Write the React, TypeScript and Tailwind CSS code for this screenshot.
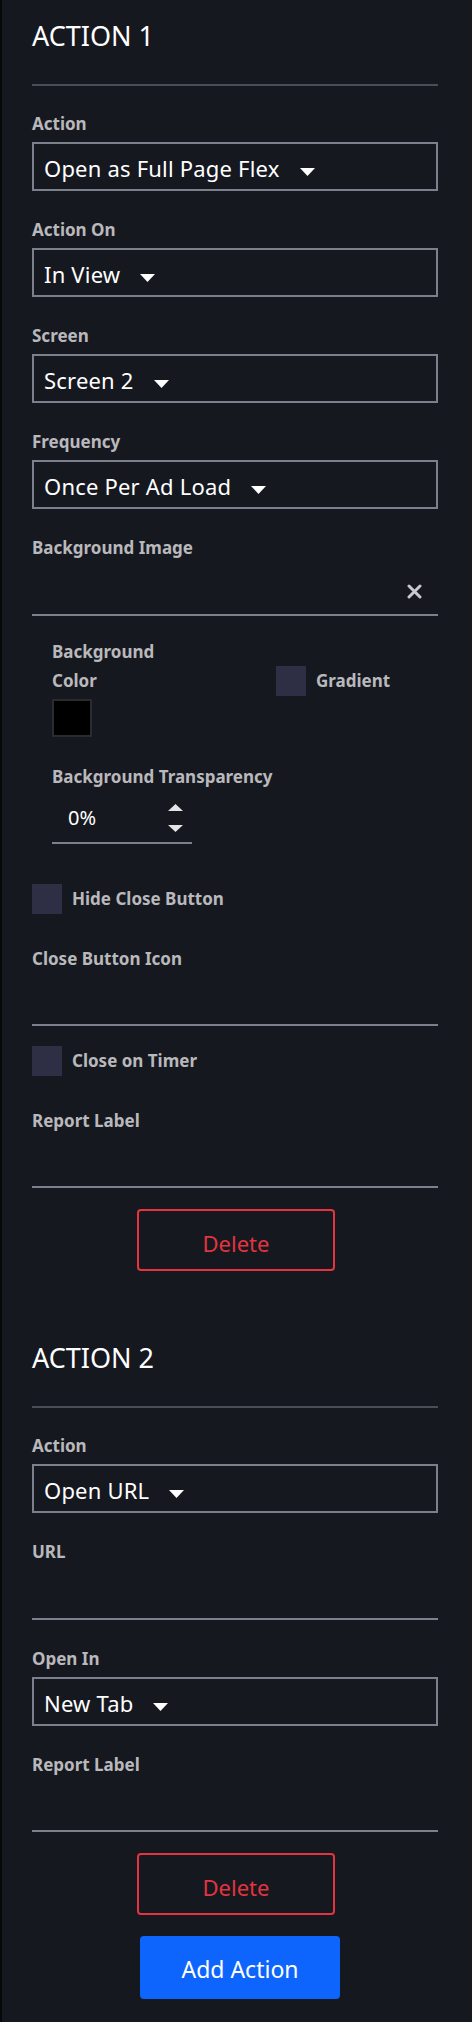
import React from "react";

const FONT = { fontFamily: '"Noto Sans", "Open Sans", sans-serif' };

function Caret() {
  return (
    <svg width="15" height="8" viewBox="0 0 15 8" className="ml-[20px] mt-[6px] shrink-0">
      <polygon points="0,0 15,0 7.5,8" fill="#ffffff" />
    </svg>
  );
}

function Label({ children }: { children: React.ReactNode }) {
  return <div className="text-[17px] leading-[24px] font-bold text-[#b9b9bc]">{children}</div>;
}

function SelectField({ label, value, first }: { label: string; value: string; first?: boolean }) {
  return (
    <div className={first ? "mt-[26px]" : "mt-[27px]"}>
      <Label>{label}</Label>
      <div className="mt-[6px] h-[49px] border-2 border-[#7c7f8c] flex items-center pl-[10px] pt-[4px] text-[22px] tracking-[0.2px] text-white">
        <span>{value}</span>
        <Caret />
      </div>
    </div>
  );
}

function LineInput({ label, h, mt, children }: { label: string; h: string; mt: string; children?: React.ReactNode }) {
  return (
    <div className={mt}>
      <Label>{label}</Label>
      <div className={`${h} border-b-2 border-[#7c7f8c]`}>{children}</div>
    </div>
  );
}

function Checkbox({ label, mt }: { label: string; mt: string }) {
  return (
    <div className={`${mt} flex items-center gap-[10px]`}>
      <div className="w-[30px] h-[30px] bg-[#2e2f45] shrink-0" />
      <span className="text-[17px] leading-[24px] font-bold text-[#b9b9bc]">{label}</span>
    </div>
  );
}

function Heading({ children, mt }: { children: React.ReactNode; mt: string }) {
  return (
    <>
      <div className={`${mt} text-[27px] leading-[32px] text-white`}>{children}</div>
      <div className="mt-[32px] h-[2px] bg-[#4a4c58]" />
    </>
  );
}

function DeleteButton() {
  return (
    <button className="mt-[21px] ml-[105px] w-[198px] h-[62px] border-2 border-[#e3343f] rounded-[4px] pt-[6px] text-[22px] text-[#e3343f] flex items-center justify-center">
      Delete
    </button>
  );
}

function Spinner() {
  return (
    <div className="ml-auto mr-[9px] flex flex-col gap-[14px]">
      <svg width="15" height="7" viewBox="0 0 15 7">
        <polygon points="7.5,0 15,7 0,7" fill="#e4e4e4" />
      </svg>
      <svg width="15" height="7" viewBox="0 0 15 7">
        <polygon points="0,0 15,0 7.5,7" fill="#e4e4e4" />
      </svg>
    </div>
  );
}

export default function App() {
  return (
    <div
      className="min-h-[2022px] bg-[#161820] border-l-2 border-[#07080a] pl-[30px] pr-[34px] pt-[20px] pb-[23px] flex flex-col"
      style={FONT}
    >
      {/* ACTION 1 */}
      <Heading mt="mt-0">ACTION 1</Heading>
      <SelectField first label="Action" value="Open as Full Page Flex" />
      <SelectField label="Action On" value="In View" />
      <SelectField label="Screen" value="Screen 2" />
      <SelectField label="Frequency" value="Once Per Ad Load" />

      <LineInput label="Background Image" h="h-[56px]" mt="mt-[27px]">
        <div className="h-full flex items-center justify-end pr-[16px] pt-[8px]">
          <svg width="15" height="15" viewBox="0 0 15 15">
            <path d="M2 2 L13 13 M13 2 L2 13" stroke="#c9c9cc" strokeWidth="3" strokeLinecap="round" />
          </svg>
        </div>
      </LineInput>

      <div className="pl-[20px] mt-[21px] flex flex-col">
        <div className="flex">
          <div className="w-[224px]">
            <div className="max-w-[120px] text-[17px] leading-[29px] font-bold text-[#b9b9bc]">Background Color</div>
            <div className="mt-[4px] w-[40px] h-[38px] bg-black border-2 border-[#2b2b2e]" />
          </div>
          <div className="pt-[29px] flex items-start gap-[10px] h-fit">
            <div className="w-[30px] h-[30px] bg-[#2e2f45] shrink-0" />
            <span className="text-[17px] leading-[24px] mt-[3px] font-bold text-[#b9b9bc]">Gradient</span>
          </div>
        </div>
        <div className="mt-[25px] text-[17px] leading-[29px] font-bold text-[#b9b9bc]">Background Transparency</div>
        <div className="mt-[3px] w-[140px] h-[50px] border-b-2 border-[#7c7f8c] flex items-center pl-[16px]">
          <span className="text-[20px] text-white">0%</span>
          <Spinner />
        </div>
      </div>

      <Checkbox label="Hide Close Button" mt="mt-[40px]" />
      <LineInput label="Close Button Icon" h="h-[55px]" mt="mt-[33px]" />
      <Checkbox label="Close on Timer" mt="mt-[20px]" />
      <LineInput label="Report Label" h="h-[55px]" mt="mt-[33px]" />
      <DeleteButton />

      {/* ACTION 2 */}
      <Heading mt="mt-[71px]">ACTION 2</Heading>
      <SelectField first label="Action" value="Open URL" />
      <LineInput label="URL" h="h-[56px]" mt="mt-[27px]" />
      <SelectField label="Open In" value="New Tab" />
      <LineInput label="Report Label" h="h-[55px]" mt="mt-[27px]" />
      <DeleteButton />

      <button className="mt-[21px] ml-[108px] w-[200px] h-[63px] bg-[#0d65fd] rounded-[4px] pt-[3px] text-[23px] text-white flex items-center justify-center">
        Add Action
      </button>
    </div>
  );
}
